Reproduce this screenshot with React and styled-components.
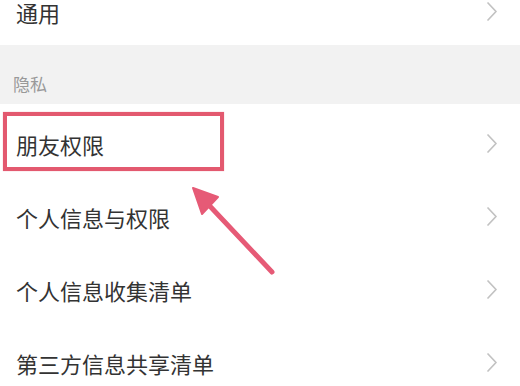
import React from "react";
import styled, { createGlobalStyle } from "styled-components";

const Global = createGlobalStyle`
  html, body {
    margin: 0;
    padding: 0;
    background: #fff;
    overflow: hidden;
  }
  body {
    font-family: "Noto Sans CJK SC", "Noto Sans", sans-serif;
  }
`;

const Page = styled.div`
  position: relative;
  width: 520px;
  height: 386px;
  overflow: hidden;
  background: #fff;
`;

const TopRow = styled.div`
  display: flex;
  align-items: flex-start;
  justify-content: space-between;
  height: 45px;
  padding: 0 23px 0 16px;
  box-sizing: border-box;
  background: #fff;
`;

const Section = styled.div`
  display: flex;
  align-items: flex-end;
  height: 59px;
  padding: 0 0 10px 13px;
  box-sizing: border-box;
  background: #f2f2f2;
  color: #999;
  font-size: 17px;
  line-height: 20px;
`;

const List = styled.div`
  padding-top: 3px;
`;

const Row = styled.div`
  position: relative;
  display: flex;
  align-items: center;
  justify-content: space-between;
  height: 73px;
  padding: 0 23px 0 16px;
  box-sizing: border-box;
`;

const Label = styled.span`
  font-size: 22px;
  line-height: ${(p) => (p.$top ? "24px" : "26px")};
  color: #333;
`;

const Highlight = styled.div`
  position: absolute;
  left: 3px;
  top: 5px;
  width: 221px;
  height: 59px;
  box-sizing: border-box;
  border: 4px solid #e3596f;
  box-shadow: 0 0 1px rgba(227, 89, 111, 0.5);
`;

const Overlay = styled.svg`
  position: absolute;
  left: 0;
  top: 0;
  pointer-events: none;
`;

const Chevron = ({ top }) => (
  <svg
    width="10"
    height="19"
    viewBox="0 0 10 19"
    style={top ? { marginTop: 2 } : undefined}
  >
    <path
      d="M1 1 L9 9.5 L1 18"
      fill="none"
      stroke="#c2c2c2"
      strokeWidth="1.7"
      strokeLinecap="round"
      strokeLinejoin="round"
    />
  </svg>
);

const rows = ["朋友权限", "个人信息与权限", "个人信息收集清单", "第三方信息共享清单"];

export default function App() {
  return (
    <Page>
      <Global />
      <TopRow>
        <Label $top>通用</Label>
        <Chevron top />
      </TopRow>
      <Section>隐私</Section>
      <List>
        {rows.map((r, i) => (
          <Row key={r}>
            {i === 0 && <Highlight />}
            <Label>{r}</Label>
            <Chevron />
          </Row>
        ))}
      </List>
      <Overlay width="520" height="386" viewBox="0 0 520 386">
        <line
          x1="206"
          y1="202"
          x2="272"
          y2="272"
          stroke="#e65a76"
          strokeWidth="5"
          strokeLinecap="round"
        />
        <polygon
          points="193,188 218,197 202,214"
          fill="#e65a76"
          stroke="#e65a76"
          strokeWidth="2"
          strokeLinejoin="round"
        />
      </Overlay>
    </Page>
  );
}
